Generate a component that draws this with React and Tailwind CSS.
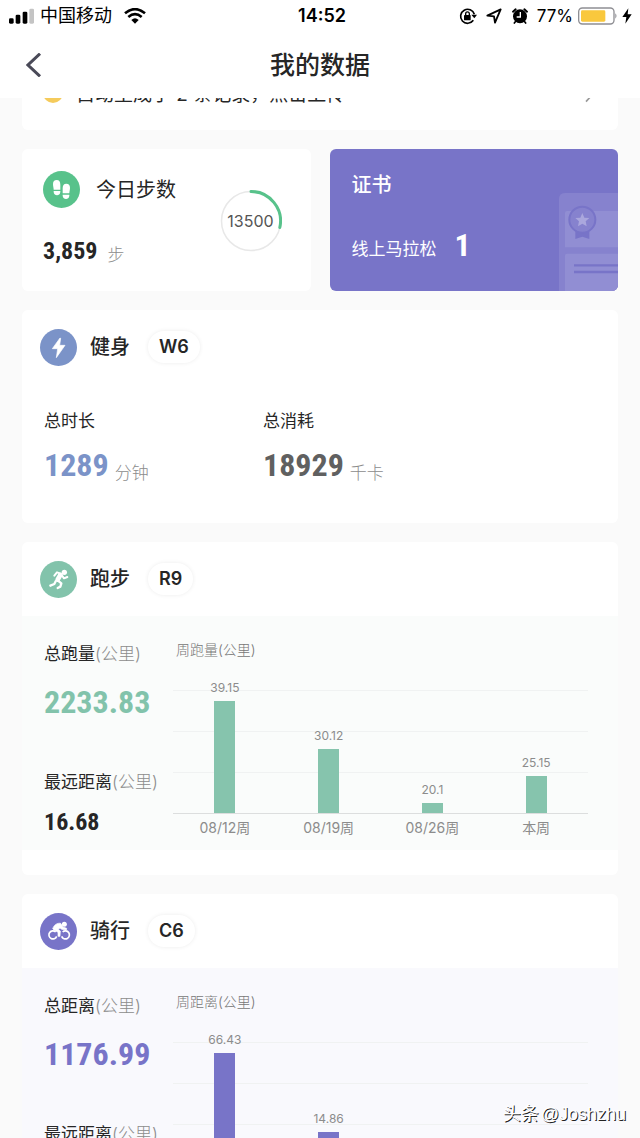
import React from "react";

const CONDENSED =
  "font-['DIN_Condensed','Liberation_Sans_Narrow','Roboto_Condensed','Open_Sans_Condensed','Liberation_Sans',sans-serif] font-bold";

function StatusBar() {
  return (
    <div className="relative flex h-8 items-center justify-between pl-[9px] pr-2 text-black">
      <div className="flex items-center gap-[6px]">
        <svg className="h-4 w-[25px]" viewBox="0 0 75 48" aria-hidden="true">
          <rect x="0" y="31" width="14" height="16" rx="4" />
          <rect x="20" y="20" width="14" height="27" rx="4" />
          <rect x="41" y="11" width="14" height="36" rx="4" />
          <rect x="61" y="2" width="14" height="45" rx="4" fill="#c4c4c4" />
        </svg>
        <span className="text-lg leading-6">中国移动</span>
        <svg className="ml-[6px] h-4 w-[22px]" viewBox="0 0 66 48" aria-hidden="true">
          <path d="M33 47 L22 36 Q33 26 44 36 Z" />
          <path d="M13 27 Q33 10 53 27" fill="none" stroke="#000" strokeWidth="8" />
          <path d="M3 16 Q33 -9 63 16" fill="none" stroke="#000" strokeWidth="8" />
        </svg>
      </div>
      <div className="absolute inset-x-0 pl-1 text-center text-lg font-semibold leading-6">14:52</div>
      <div className="flex items-center">
        <svg className="h-[18px] w-[18px]" viewBox="0 0 54 54" aria-hidden="true">
          <path d="M43 40 A21 21 0 1 1 46 22" fill="none" stroke="#000" strokeWidth="5" />
          <path d="M37 23 H54 L46 34 Z" />
          <rect x="15" y="24" width="20" height="16" rx="2" />
          <path d="M20 25 V20 a5.500 5.500 0 0 1 11 0 V25" fill="none" stroke="#000" strokeWidth="4" />
        </svg>
        <svg className="ml-[9px] h-4 w-4" viewBox="0 0 48 48" aria-hidden="true">
          <path d="M4 23 L44 4 L27 44 L24 25 Z" fill="none" stroke="#000" strokeWidth="5.500" strokeLinejoin="round" />
        </svg>
        <svg className="ml-[9px] h-[18px] w-[18px]" viewBox="0 0 54 54" aria-hidden="true">
          <circle cx="27" cy="28" r="21" />
          <path d="M6 14 L14 7 M48 14 L40 7" stroke="#000" strokeWidth="6" strokeLinecap="round" />
          <path d="M13 44 L10 48 M41 44 L44 48" stroke="#000" strokeWidth="5" strokeLinecap="round" />
          <path d="M28 15 V30 H17" fill="none" stroke="#fff" strokeWidth="4" />
        </svg>
        <span className="ml-2 text-[17px] leading-6">77%</span>
        <svg className="ml-[5px] h-[18px] w-10" viewBox="0 0 120 54" aria-hidden="true">
          <rect x="2" y="3" width="106" height="48" rx="11" fill="#fff" stroke="#8f8f94" strokeWidth="4" />
          <rect x="9" y="10" width="73" height="34" rx="4" fill="#f9c83d" />
          <path d="M112 19 q7 8 0 16 Z" fill="#8f8f94" />
        </svg>
        <svg className="ml-1 h-4 w-[10px]" viewBox="0 0 30 48" aria-hidden="true">
          <path d="M19 1 L1 27 H13 L10 47 L29 19 H17 Z" />
        </svg>
      </div>
    </div>
  );
}

function FeetIcon() {
  return (
    <svg className="size-[37px] shrink-0" viewBox="0 0 111 111" aria-hidden="true">
      <circle cx="55.500" cy="55.500" r="55.500" fill="#58c28b" />
      <g fill="#fff">
        <path d="M30 39 C30 31 34 27 41 27 C49 27 52 33 52 41 L52 56 H32 C32 50 30 46 30 39 Z" />
        <path d="M32 60 H52 V63 C51 76 33 76 32 63 Z" />
        <path d="M81 50 C81 42 77 38 70 38 C62 38 59 44 59 52 L59 67 H79 C79 61 81 57 81 50 Z" />
        <path d="M59 71 H79 V74 C78 87 60 87 59 74 Z" />
      </g>
    </svg>
  );
}

function BoltIcon() {
  return (
    <svg className="size-[37px] shrink-0" viewBox="0 0 111 111" aria-hidden="true">
      <circle cx="55.500" cy="55.500" r="55.500" fill="#7b93c8" />
      <path d="M60 27 L37 59 H53 L49 86 L75 49 H59 L62 28 Z" fill="#fff" stroke="#fff" strokeWidth="2" strokeLinejoin="round" />
    </svg>
  );
}

function RunnerIcon() {
  return (
    <svg className="size-[37px] shrink-0" viewBox="0 0 111 111" aria-hidden="true">
      <circle cx="55.500" cy="55.500" r="55.500" fill="#82c3ab" />
      <circle cx="73" cy="34" r="8" fill="#fff" />
      <g fill="none" stroke="#fff" strokeLinecap="round" strokeLinejoin="round">
        <path d="M43 44 L51 34 L62 38" strokeWidth="6" />
        <path d="M61 42 L53 56" strokeWidth="14" />
        <path d="M65 42 L72 52 L82 48" strokeWidth="6" />
        <path d="M54 59 L64 67 L61 77 L53 81" strokeWidth="7" />
        <path d="M47 61 L43 69 L31 74" strokeWidth="7" />
      </g>
    </svg>
  );
}

function CyclistIcon() {
  return (
    <svg className="size-[37px] shrink-0" viewBox="0 0 111 111" aria-hidden="true">
      <circle cx="55.500" cy="55.500" r="55.500" fill="#7874c8" />
      <g fill="none" stroke="#fff" strokeWidth="5">
        <path d="M47 57 A12 12 0 1 0 50 70" />
        <path d="M68 57 A12 12 0 1 1 65 70" />
      </g>
      <circle cx="73" cy="34" r="7.500" fill="#fff" />
      <path d="M38 47 C42 36 51 29 62 31 L69 42 L80 46 L79 51 L65 49 L60 45 L55 49 L61 54 L60 70 H54 V58 L42 51 Z" fill="#fff" stroke="#fff" strokeWidth="2" strokeLinejoin="round" />
    </svg>
  );
}

function CertificateArt() {
  return (
    <svg className="absolute bottom-0 right-0 h-[98px] w-[59px]" viewBox="0 0 177 294" aria-hidden="true">
      <path d="M0 294 V18 Q0 0 18 0 H177 V294 Z" fill="#8682ce" />
      <path d="M18 163 V60 Q18 54 24 54 H177 V163 Z" fill="#918ed3" />
      <path d="M18 294 V188 Q18 182 24 182 H177 V294 Z" fill="#918ed3" />
      <path d="M49 108 H91 V138 L70 131 L49 138 Z" fill="#7874c8" />
      <circle cx="70" cy="80" r="39" fill="#8682ce" stroke="#7874c8" strokeWidth="6" />
      <path d="M70 60 L76 74 L91 75 L80 85 L83 100 L70 92 L57 100 L60 85 L49 75 L64 74 Z" fill="#aaa7dd" />
      <path d="M45 217 H177 M45 237 H177" stroke="#7874c8" strokeWidth="7" />
    </svg>
  );
}

function Card({ children }) {
  return <section className="shrink-0 overflow-hidden rounded-md bg-white">{children}</section>;
}

function CardHeader({ icon, title, level }) {
  return (
    <div className="flex h-[74px] items-center pl-[18px]">
      {icon}
      <h2 className="ml-[13px] text-xl font-medium leading-7">{title}</h2>
      <span className="ml-[18px] rounded-full px-[11px] py-1 text-lg font-semibold leading-6 shadow-[0_0_4px_rgba(0,0,0,0.08)]">
        {level}
      </span>
    </div>
  );
}

function Label({ children, unit }) {
  return (
    <div className="whitespace-nowrap text-[17px] leading-6">
      {children}
      {unit && <span className="font-light text-[#8c8c8c]">({unit})</span>}
    </div>
  );
}

function Total({ value, unit, colorClass }) {
  return (
    <div className="mt-2 flex items-end gap-[6px]">
      <span className={"text-[32px] leading-[48px] " + CONDENSED + " " + colorClass}>{value}</span>
      <span className="text-[17px] font-light leading-8 text-[#8c8c8c]">{unit}</span>
    </div>
  );
}

function WeekChart({ title, data, barClass }) {
  return (
    <div className="min-w-0 flex-1">
      <div className="pl-[3px] text-sm font-light leading-5 text-[#777]">{title}</div>
      <div className="mt-[30px] grid grid-rows-[124px]">
        <div className="col-start-1 row-start-1 flex flex-col justify-between">
          <div className="h-px bg-[#f0f2f2]" />
          <div className="h-px bg-[#f0f2f2]" />
          <div className="h-px bg-[#f0f2f2]" />
          <div className="h-px bg-[#dcdede]" />
        </div>
        <div className="col-start-1 row-start-1 grid grid-cols-4 items-end pb-px">
          {data.map((d) => (
            <div key={d.week} className="flex h-0 flex-col items-center justify-end">
              <span className="text-xs leading-4 text-[#8c8c8c]">{d.value}</span>
              <div className={"mt-[5px] w-[21px] shrink-0 " + barClass} style={{ height: d.height }} />
            </div>
          ))}
        </div>
      </div>
      <div className="mt-1 grid grid-cols-4 text-center text-sm leading-5 text-[#8c8c8c]">
        {data.map((d) => (
          <span key={d.week}>{d.week}</span>
        ))}
      </div>
    </div>
  );
}

function SportCard({ icon, title, level, panelClass, totalLabel, total, totalClass, best, chartTitle, data, barClass }) {
  return (
    <Card>
      <CardHeader icon={icon} title={title} level={level} />
      <div className={"flex pb-3 pl-[22px] pr-[30px] pt-6 " + panelClass}>
        <div className="w-[129px] shrink-0 pt-[2px]">
          <Label unit="公里">{totalLabel}</Label>
          <div className={"mt-3 text-[32px] leading-[48px] " + CONDENSED + " " + totalClass}>{total}</div>
          <div className="mt-11">
            <Label unit="公里">最远距离</Label>
          </div>
          <div className={"mt-3 text-2xl leading-8 " + CONDENSED}>{best}</div>
        </div>
        <WeekChart title={chartTitle} data={data} barClass={barClass} />
      </div>
      <div className="h-[25px]" />
    </Card>
  );
}

const RUN_WEEKS = [
  { week: "08/12周", value: "39.15", height: 112 },
  { week: "08/19周", value: "30.12", height: 64 },
  { week: "08/26周", value: "20.1", height: 10 },
  { week: "本周", value: "25.15", height: 37 },
];

const RIDE_WEEKS = [
  { week: "08/12周", value: "66.43", height: 112 },
  { week: "08/19周", value: "14.86", height: 33 },
];

export default function App() {
  return (
    <div className="relative flex h-screen flex-col overflow-hidden bg-[#fafafa] font-['Inter','Noto_Sans_CJK_SC',sans-serif] text-[#262626]">
      <header className="shrink-0 bg-white">
        <StatusBar />
        <div className="relative flex h-[66px] items-center justify-center">
          <button type="button" aria-label="返回" className="absolute left-[22px] p-1">
            <svg className="h-6 w-4" viewBox="0 0 48 72" aria-hidden="true">
              <path d="M42 2 L6 36 L42 70" fill="none" stroke="#4a4a58" strokeWidth="9" />
            </svg>
          </button>
          <h1 className="text-[25px] font-medium leading-8">我的数据</h1>
        </div>
      </header>

      <main className="flex min-h-0 flex-1 flex-col gap-[19px] overflow-hidden px-[22px]">
        <section className="shrink-0 rounded-b-md bg-white pb-[26px]">
          <a href="#upload" className="flex h-[6px] items-end overflow-hidden pl-[21px] pr-[25px]">
            <span className="mb-px size-5 shrink-0 rounded-full bg-[#f5cb5c]" />
            <span className="-mb-[3px] ml-[13px] text-[19px] leading-6">自动生成了 2 条记录，点击上传</span>
            <svg className="mb-px ml-auto h-4 w-2" viewBox="0 0 24 48" aria-hidden="true">
              <path d="M3 4 L21 24 L3 44" fill="none" stroke="#999" strokeWidth="5" />
            </svg>
          </a>
        </section>

        <div className="grid shrink-0 grid-cols-2 gap-[19px]">
          <section className="flex items-center justify-between rounded-md bg-white pb-5 pl-[21px] pr-[29px] pt-[22px]">
            <div>
              <div className="flex items-center gap-4">
                <FeetIcon />
                <h2 className="text-xl leading-7">今日步数</h2>
              </div>
              <div className="mt-[23px] flex items-center gap-[10px]">
                <span className={"text-2xl leading-10 " + CONDENSED}>3,859</span>
                <span className="pt-2 text-[17px] font-light leading-6 text-[#8c8c8c]">步</span>
              </div>
            </div>
            <div className="grid size-[62px] shrink-0 place-items-center">
              <svg className="col-start-1 row-start-1 size-[62px]" viewBox="0 0 62 62" aria-hidden="true">
                <circle cx="31" cy="31" r="29.500" fill="none" stroke="#e8e8e8" strokeWidth="1.500" />
                <path d="M31 1.500 A29.500 29.500 0 0 1 59.800 37.500" fill="none" stroke="#58c28b" strokeWidth="3" strokeLinecap="round" />
              </svg>
              <span className="col-start-1 row-start-1 text-base leading-5 text-[#555]">13500</span>
            </div>
          </section>

          <section className="relative overflow-hidden rounded-md bg-[#7874c8] px-[22px] pb-[26px] pt-[22px] text-white">
            <CertificateArt />
            <h2 className="text-xl font-medium leading-7">证书</h2>
            <div className="mt-[26px] flex items-center gap-[18px]">
              <span className="pt-2 text-[17px] leading-8">线上马拉松</span>
              <span className={"text-[32px] leading-10 " + CONDENSED}>1</span>
            </div>
          </section>
        </div>

        <Card>
          <CardHeader icon={<BoltIcon />} title="健身" level="W6" />
          <div className="flex pb-[34px] pl-[22px] pt-[25px]">
            <div className="w-[219px]">
              <Label>总时长</Label>
              <Total value="1289" unit="分钟" colorClass="text-[#7b93c8]" />
            </div>
            <div>
              <Label>总消耗</Label>
              <Total value="18929" unit="千卡" colorClass="text-[#606060]" />
            </div>
          </div>
        </Card>

        <SportCard
          icon={<RunnerIcon />}
          title="跑步"
          level="R9"
          panelClass="bg-[#fafcfb]"
          totalLabel="总跑量"
          total="2233.83"
          totalClass="text-[#82c3ab]"
          best="16.68"
          chartTitle="周跑量(公里)"
          data={RUN_WEEKS}
          barClass="bg-[#86c4ad]"
        />

        <SportCard
          icon={<CyclistIcon />}
          title="骑行"
          level="C6"
          panelClass="bg-[#f9f9fd]"
          totalLabel="总距离"
          total="1176.99"
          totalClass="text-[#7874c8]"
          best=""
          chartTitle="周距离(公里)"
          data={RIDE_WEEKS}
          barClass="bg-[#7874c8]"
        />
      </main>

      <div className="absolute bottom-3 right-[14px] flex gap-[2px] font-['Liberation_Sans','Noto_Sans_CJK_SC',sans-serif] text-lg leading-6 text-white [text-shadow:1px_1px_0_#222]">
        <span>头条</span>
        <span>@Joshzhu</span>
      </div>
    </div>
  );
}
